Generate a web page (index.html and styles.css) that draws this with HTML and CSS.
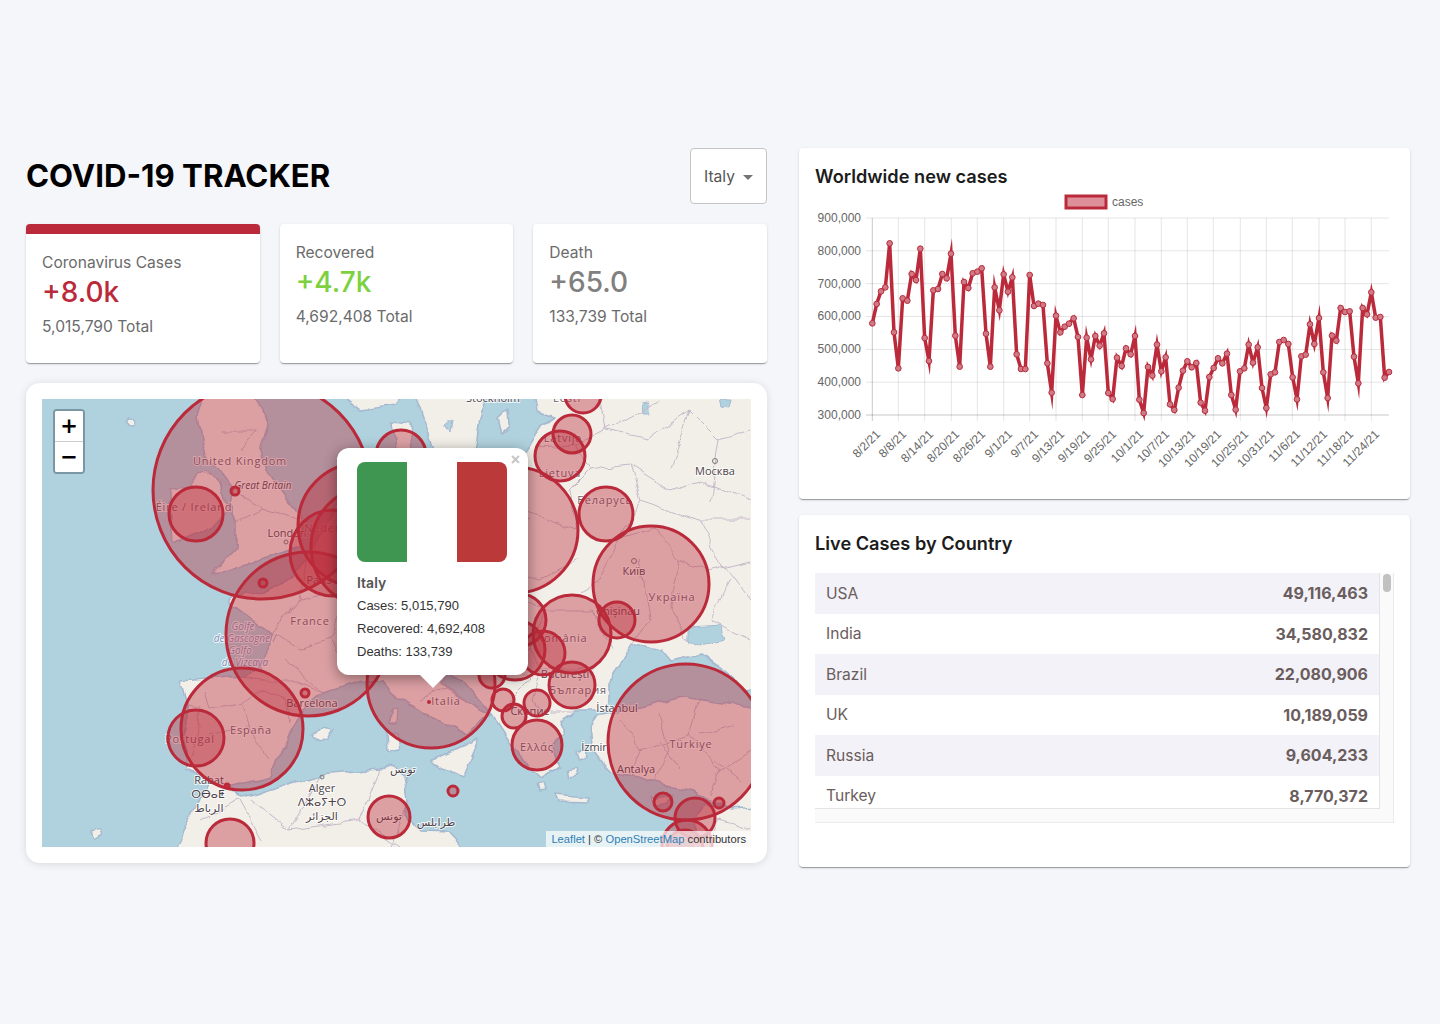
FILE: index.html
```html
<!DOCTYPE html>
<html lang="en">
<head>
<meta charset="utf-8">
<title>COVID-19 Tracker</title>
<link rel="stylesheet" href="styles.css">
</head>
<body>
<div class="app">
  <main class="left">
    <header class="header">
      <h1 class="title">COVID-19 TRACKER</h1>
      <div class="select"><span>Italy</span><i class="caret"></i></div>
    </header>
    <section class="stats">
      <article class="card stat stat-active">
        <p class="stat-label">Coronavirus Cases</p>
        <p class="stat-num red">+8.0k</p>
        <p class="stat-total">5,015,790 Total</p>
      </article>
      <article class="card stat">
        <p class="stat-label">Recovered</p>
        <p class="stat-num green">+4.7k</p>
        <p class="stat-total">4,692,408 Total</p>
      </article>
      <article class="card stat">
        <p class="stat-label">Death</p>
        <p class="stat-num grey">+65.0</p>
        <p class="stat-total">133,739 Total</p>
      </article>
    </section>
    <section class="map-card">
      <div class="map">
        <svg class="map-svg" viewBox="42 399 709 448" width="709" height="448" aria-label="Map of Europe">
          <defs>
            <filter id="rough" x="-5%" y="-5%" width="110%" height="110%" color-interpolation-filters="sRGB">
              <feTurbulence type="fractalNoise" baseFrequency=".04" numOctaves="3" seed="4" result="n"/>
              <feDisplacementMap in="SourceGraphic" in2="n" scale="10" xChannelSelector="R" yChannelSelector="G"/>
              <feGaussianBlur stdDeviation=".45"/>
            </filter>
          </defs>
          <rect class="water" x="42" y="399" width="709" height="448"/>
          <g class="geo">
            <g class="land">
              <path d="M533 385L770 385L770 690L747 693L723 670L703 655L670 662L660 650L633 643L623 660L607 683L607 700L605 712L575 712L560 722L566 735L552 745L560 765L540 778L528 768L510 740L498 722L478 698L462 680L445 672L440 685L470 705L493 717L480 722L467 735L433 717L400 700L385 682L363 680L323 692L303 710L287 737L270 777L227 787L187 770L187 707L180 680L243 675L263 670L270 633L230 603L230 597L263 590L293 577L307 557L340 500L370 480L400 470L470 470L517 467L527 452L545 425L555 418L537 412Z"/>
              <path d="M207 385L250 385L267 423L260 450L270 477L293 507L303 523L300 547L263 560L230 570L213 572L237 547L237 523L230 503L233 487L220 470L203 450L197 417Z"/>
              <path d="M207 470L220 483L227 513L203 533L173 543L170 507L170 490L190 487L197 473Z"/>
              <path d="M340 385L347 399L362 410L395 405L408 385Z"/>
              <path d="M413 385L490 385L480 420L472 470L440 470L432 440L425 420Z"/>
              <path d="M392 422L410 424L412 450L395 450Z"/>
              <path d="M597 717L617 713L640 707L683 697L770 710L770 840L733 810L700 796L690 790L660 785L640 777L613 773L603 763L593 750L590 727Z"/>
              <path d="M770 806L733 810L705 803L697 815L690 860L770 860Z"/>
              <path d="M170 860L197 807L207 780L227 787L243 798L270 790L320 775L380 770L393 763L405 778L408 800L405 815L420 832L450 833L475 860Z"/>
              <path d="M430 760L480 738L463 777L443 767Z"/>
              <path d="M386 730L397 733L399 750L387 752Z"/>
              <path d="M391 708L397 710L396 724L390 724Z"/>
              <path d="M311 737L322 728L332 730L326 740L317 743Z"/>
              <path d="M555 795L587 798L586 803L558 802Z"/>
              <path d="M498 420L508 410L509 425L502 432Z"/>
              <path d="M651 798L672 794L666 803L655 804Z"/>
              <path d="M91 832L101 829L103 836L95 841Z"/>
              <path d="M575 752L583 748L586 757L578 760Z"/>
              <path d="M568 770L575 768L577 775L570 777Z"/>
              <path d="M538 785L544 783L546 790L540 791Z"/>
              <circle cx="131" cy="422" r="4"/>
            </g>
            <g class="lakes">
              <path d="M690 627L720 625L725 640L700 645L690 640Z"/>
              <path d="M640 403L648 402L648 412L641 412Z"/>
              <path d="M720 399L730 399L728 408L722 407Z"/>
              <path d="M445 425L452 420L450 432Z"/>
            </g>
            <g class="borders">
              <path d="M243 675L262 682L300 682L323 692M187 707L200 709L198 740L187 770M205 690L210 710L240 705L255 740L270 760M240 705L262 690L285 700L290 720M210 735L250 725"/>
              <path d="M230 640L270 633L300 600L307 557M270 633L300 650L330 640L350 670M300 600L345 590L370 620L385 660M330 640L345 600M285 660L323 692"/>
              <path d="M200 470L240 490M233 487L262 510L303 523M237 523L262 510M240 450L255 430L220 430"/>
              <path d="M400 470L420 520L440 555L425 600L385 640M470 470L480 540L500 570M500 570L540 580L577 560M517 467L520 510L577 530M480 510L530 520M500 560L520 600L545 610"/>
              <path d="M537 447L575 445L603 430L640 410L660 399M575 445L590 470L570 490L577 530M590 470L630 465L670 490L700 480L751 500M630 465L640 500L620 540L655 530L680 560L710 570L751 560M620 540L600 580L580 590M640 500L700 520L751 520M680 560L670 610L690 640M640 560L650 620L630 645"/>
              <path d="M600 399L605 430L650 440L690 410L720 440L751 430M690 410L670 470M720 440L710 500M700 520L720 560L751 600M730 580L710 620L751 640"/>
              <path d="M545 610L590 610L612 650M545 610L530 650L540 670L596 670M540 670L530 700L545 712L575 712M510 660L530 680L510 700M478 650L510 660M450 640L500 625L530 650"/>
              <path d="M620 720L640 750L630 775M640 750L690 735L700 700M690 735L720 770L710 796M720 770L751 750M660 715L670 750L655 780M700 735L735 725M680 770L660 740M740 780L715 760"/>
              <path d="M200 820L240 800L262 840M250 800L290 830L320 775M290 830L360 820L380 770M360 820L400 847M408 800L392 847"/>
              <path d="M720 820L705 847M720 820L751 830"/>
              <path d="M410 672L430 670L445 690L470 705M420 700L445 690"/>
            </g>
          </g>
          <g class="labels">
            <text class="lb country" x="240" y="465">United Kingdom</text>
            <text class="lb it" x="263" y="489">Great Britain</text>
            <text class="lb country" x="194" y="511">Éire / Ireland</text>
            <text class="lb" x="287" y="537">London</text>
            <circle class="city" cx="286" cy="542" r="2"/>
            <text class="lb" x="319" y="584">Paris</text>
            <text class="lb country" x="310" y="625">France</text>
            <text class="lb sea" x="243" y="630">Golfe</text>
            <text class="lb sea" x="245" y="642">de Gascogne /</text>
            <text class="lb sea" x="240" y="654">Golfo</text>
            <text class="lb sea" x="245" y="666">de Vizcaya</text>
            <text class="lb country" x="251" y="734">España</text>
            <text class="lb country" x="190" y="743">Portugal</text>
            <text class="lb" x="312" y="707">Barcelona</text>
            <text class="lb" x="209" y="784">Rabat</text>
            <text class="lb" x="208" y="798">ⵔⴱⴰⵟ</text>
            <text class="lb" x="209" y="812">الرباط</text>
            <text class="lb" x="322" y="792">Alger</text>
            <text class="lb" x="322" y="806">ⴷⵣⴰⵢⵜⵔ</text>
            <text class="lb" x="322" y="820">الجزائر</text>
            <circle class="city" cx="322" cy="777" r="2"/>
            <text class="lb" x="389" y="820">تونس</text>
            <text class="lb" x="403" y="773">تونس</text>
            <text class="lb" x="436" y="826">طرابلس</text>
            <text class="lb country" x="446" y="705">Italia</text>
            <text class="lb country" x="562" y="642">România</text>
            <text class="lb" x="565" y="678">București</text>
            <text class="lb country" x="578" y="694">България</text>
            <text class="lb" x="530" y="715">Скопие</text>
            <text class="lb country" x="537" y="751">Ελλάς</text>
            <text class="lb" x="617" y="712">İstanbul</text>
            <text class="lb" x="594" y="751">İzmir</text>
            <text class="lb country" x="691" y="748">Türkiye</text>
            <text class="lb" x="636" y="773">Antalya</text>
            <text class="lb" x="715" y="475">Москва</text>
            <circle class="city" cx="715" cy="461" r="2.5"/>
            <text class="lb" x="634" y="575">Київ</text>
            <circle class="city" cx="634" cy="561" r="2.5"/>
            <text class="lb country" x="672" y="601">Україна</text>
            <text class="lb" x="618" y="615">Chișinău</text>
            <text class="lb country" x="605" y="504">Беларусь</text>
            <text class="lb country" x="563" y="442">Latvija</text>
            <text class="lb country" x="560" y="477">Lietuva</text>
            <text class="lb country" x="567" y="402">Eesti</text>
            <text class="lb" x="493" y="402">Stockholm</text>
            <text class="lb country" x="335" y="532">Nederland</text>
          </g>
          <g class="bubbles">
            <circle cx="262" cy="490" r="109"/>
            <circle cx="196" cy="514" r="27"/>
            <circle cx="235" cy="491" r="4"/>
            <circle cx="263" cy="583" r="4"/>
            <circle cx="360" cy="525" r="62"/>
            <circle cx="333" cy="553" r="43"/>
            <circle cx="372" cy="547" r="61"/>
            <circle cx="308" cy="634" r="82"/>
            <circle cx="242" cy="729" r="61"/>
            <circle cx="196" cy="738" r="28"/>
            <circle cx="230" cy="843" r="24"/>
            <circle cx="227" cy="786" r="2"/>
            <circle cx="305" cy="693" r="4"/>
            <circle cx="389" cy="817" r="21"/>
            <circle cx="431" cy="684" r="64"/>
            <circle cx="453" cy="791" r="5"/>
            <circle cx="401" cy="455" r="25"/>
            <circle cx="583" cy="395" r="18"/>
            <circle cx="572" cy="434" r="19"/>
            <circle cx="560" cy="456" r="25"/>
            <circle cx="606" cy="514" r="27"/>
            <circle cx="515" cy="530" r="63"/>
            <circle cx="651" cy="584" r="58"/>
            <circle cx="617" cy="620" r="18"/>
            <circle cx="572" cy="634" r="39"/>
            <circle cx="520" cy="620" r="26"/>
            <circle cx="515" cy="650" r="30"/>
            <circle cx="543" cy="653" r="22"/>
            <circle cx="572" cy="685" r="23"/>
            <circle cx="537" cy="703" r="13"/>
            <circle cx="514" cy="716" r="12"/>
            <circle cx="503" cy="700" r="11"/>
            <circle cx="492" cy="675" r="13"/>
            <circle cx="537" cy="745" r="25"/>
            <circle cx="686" cy="742" r="78"/>
            <circle cx="663" cy="802" r="9"/>
            <circle cx="719" cy="803" r="5"/>
            <circle cx="695" cy="818" r="20"/>
            <circle cx="687" cy="845" r="25"/>
            <circle cx="685" cy="848" r="18"/>
          </g>
          <circle class="bubble-dot" cx="429" cy="702" r="2"/>
        </svg>
        <div class="zoom-ctl">
          <button class="zoom-btn zoom-in" type="button">+</button>
          <button class="zoom-btn" type="button">−</button>
        </div>
        <div class="popup">
          <div class="flag"><i class="flag-g"></i><i class="flag-w"></i><i class="flag-r"></i></div>
          <p class="pop-name">Italy</p>
          <p class="pop-line">Cases: 5,015,790</p>
          <p class="pop-line">Recovered: 4,692,408</p>
          <p class="pop-line">Deaths: 133,739</p>
          <span class="pop-close">×</span>
          <i class="pop-tip"></i>
        </div>
        <div class="attrib"><a>Leaflet</a> | © <a>OpenStreetMap</a> contributors</div>
      </div>
    </section>
  </main>
  <aside class="right">
    <section class="card panel chart-panel">
      <h3 class="panel-title chart-title">Worldwide new cases</h3>
      <svg class="chart" viewBox="815 190 579 290" width="579" height="290" aria-label="Worldwide new cases chart">
        <defs>
          <marker id="pt" markerUnits="userSpaceOnUse" viewBox="-12 -12 24 24" markerWidth="24" markerHeight="24" refX="0" refY="0">
            <circle class="pt" r="8.5"/>
          </marker>
        </defs>
        <rect class="legend-box" x="1066" y="196" width="40" height="12"/>
        <text class="legend-text" x="1112" y="206">cases</text>
        <g class="grid-h">
          <path class="edge" d="M866 218H1389"/>
          <path d="M866 250.8H1389M866 283.7H1389M866 316.5H1389M866 349.4H1389M866 382.2H1389"/>
          <path class="axis" d="M866 415H1389"/>
        </g>
        <g class="grid-v">
          <path class="axis" d="M872.3 218V421"/>
          <path d="M898.3 218V421M924.7 218V421M951.3 218V421M977.3 218V421M1003.7 218V421M1029.7 218V421M1056 218V421M1082.3 218V421M1108.3 218V421M1135 218V421M1161.3 218V421M1187.3 218V421M1213.3 218V421M1240.3 218V421M1266.3 218V421M1292.3 218V421M1319 218V421M1345 218V421M1371.3 218V421"/>
        </g>
        <g class="ylabels">
          <text x="861" y="222">900,000</text>
          <text x="861" y="255">800,000</text>
          <text x="861" y="288">700,000</text>
          <text x="861" y="320">600,000</text>
          <text x="861" y="353">500,000</text>
          <text x="861" y="386">400,000</text>
          <text x="861" y="419">300,000</text>
        </g>
        <g class="xlabels">
          <text transform="translate(881 435) rotate(-45)">8/2/21</text>
          <text transform="translate(907 435) rotate(-45)">8/8/21</text>
          <text transform="translate(934 435) rotate(-45)">8/14/21</text>
          <text transform="translate(960 435) rotate(-45)">8/20/21</text>
          <text transform="translate(986 435) rotate(-45)">8/26/21</text>
          <text transform="translate(1013 435) rotate(-45)">9/1/21</text>
          <text transform="translate(1039 435) rotate(-45)">9/7/21</text>
          <text transform="translate(1065 435) rotate(-45)">9/13/21</text>
          <text transform="translate(1091 435) rotate(-45)">9/19/21</text>
          <text transform="translate(1117 435) rotate(-45)">9/25/21</text>
          <text transform="translate(1144 435) rotate(-45)">10/1/21</text>
          <text transform="translate(1170 435) rotate(-45)">10/7/21</text>
          <text transform="translate(1196 435) rotate(-45)">10/13/21</text>
          <text transform="translate(1222 435) rotate(-45)">10/19/21</text>
          <text transform="translate(1249 435) rotate(-45)">10/25/21</text>
          <text transform="translate(1275 435) rotate(-45)">10/31/21</text>
          <text transform="translate(1301 435) rotate(-45)">11/6/21</text>
          <text transform="translate(1328 435) rotate(-45)">11/12/21</text>
          <text transform="translate(1354 435) rotate(-45)">11/18/21</text>
          <text transform="translate(1380 435) rotate(-45)">11/24/21</text>
        </g>
        <g transform="translate(800 150) scale(.33333)">
          <polyline class="series" points="217,520 230,462 243,424 256,412 269,280 282,547 295,655 308,445 322,452 335,372 348,390 361,296 374,564 387,633 400,421 414,417 427,372 440,385 453,311 466,557 479,650 492,396 505,414 518,370 532,365 545,355 558,551 571,650 584,412 598,481 611,373 624,425 637,382 650,613 663,657 676,657 689,375 702,468 715,461 729,465 742,640 755,728 768,497 781,547 794,530 807,521 821,505 834,561 847,735 860,563 873,628 886,558 899,587 912,550 925,729 938,747 951,623 965,648 978,595 992,613 1005,558 1018,749 1031,789 1044,651 1057,677 1071,584 1084,664 1097,622 1110,763 1123,780 1136,713 1149,662 1162,634 1175,652 1189,639 1202,758 1215,782 1228,681 1241,654 1254,625 1267,640 1281,611 1294,735 1307,779 1320,664 1333,655 1346,584 1359,638 1373,592 1386,714 1399,774 1412,673 1425,667 1438,576 1451,570 1465,582 1478,682 1491,748 1504,619 1517,614 1530,523 1543,582 1557,504 1570,667 1583,744 1596,557 1609,572 1622,474 1635,486 1649,484 1662,620 1675,700 1688,474 1701,493 1714,427 1727,503 1741,501 1754,683 1767,666"/>
        </g>
      </svg>
    </section>
    <section class="card panel table-panel">
      <h3 class="panel-title">Live Cases by Country</h3>
      <div class="table-wrap">
        <div class="table-view">
          <div class="row"><span>USA</span><strong>49,116,463</strong></div>
          <div class="row"><span>India</span><strong>34,580,832</strong></div>
          <div class="row"><span>Brazil</span><strong>22,080,906</strong></div>
          <div class="row"><span>UK</span><strong>10,189,059</strong></div>
          <div class="row"><span>Russia</span><strong>9,604,233</strong></div>
          <div class="row"><span>Turkey</span><strong>8,770,372</strong></div>
          <div class="row"><span>France</span><strong>7,600,000</strong></div>
        </div>
        <i class="thumb"></i>
      </div>
    </section>
  </aside>
</div>
</body>
</html>
```
FILE: styles.css
```css
* { box-sizing: border-box; }
html, body { margin: 0; height: 100%; }
body {
  background: #f5f6fa;
  font-family: Inter, "Liberation Sans", sans-serif;
  color: #000;
}
p, h1, h3 { margin: 0; }
.app {
  display: flex;
  justify-content: space-between;
  gap: 32px;
  padding: 148px 30px 0 26px;
  min-height: 1024px;
}
.left { width: 741px; display: flex; flex-direction: column; }
.right { width: 611px; display: flex; flex-direction: column; gap: 16px; }

.header {
  display: flex;
  justify-content: space-between;
  align-items: center;
  height: 56px;
  margin-bottom: 20px;
}
.title { font-size: 31.2px; font-weight: 700; line-height: 62px; color: #000; }
.select {
  width: 77px;
  height: 56px;
  background: #fff;
  border: 1px solid #c4c4c4;
  border-radius: 4px;
  display: flex;
  align-items: center;
  padding-left: 13px;
  font-size: 15.6px;
  color: #555;
  position: relative;
}
.caret {
  position: absolute;
  right: 13px;
  top: 26px;
  border-left: 5px solid transparent;
  border-right: 5px solid transparent;
  border-top: 5px solid #757575;
}

.card {
  background: #fff;
  border-radius: 4px;
  box-shadow: 0 2px 1px -1px rgba(0,0,0,.2), 0 1px 1px rgba(0,0,0,.14), 0 1px 3px rgba(0,0,0,.12);
}
.stats { display: flex; gap: 20px; margin-bottom: 20px; }
.stat { flex: 1; height: 139px; padding: 19px 16px 0; }
.stat-active { border-top: 10px solid #bb2a3a; }
.stat-label { font-size: 15.6px; line-height: 19px; color: #6b6b6b; }
.stat-num { font-size: 28px; font-weight: 500; line-height: 34px; margin-top: 3px; }
.red { color: #bb2a3a; }
.green { color: #7dd13f; }
.grey { color: #808080; }
.stat-total { font-size: 15.6px; line-height: 19px; color: #6b6b6b; margin-top: 8px; }

.map-card {
  background: #fff;
  border-radius: 14px;
  padding: 16px;
  height: 480px;
  box-shadow: 0 1px 8px rgba(0,0,0,.12);
}
.map { position: relative; width: 709px; height: 448px; overflow: hidden; }
.map-svg { display: block; }
.water { fill: #b0d2de; }
.geo { filter: url(#rough); }
.land path, .land circle { fill: #f2efe9; stroke: #a5b9d0; stroke-width: 1.6; stroke-linejoin: round; }
.lakes path { fill: #b0d2de; stroke: #a5b9d0; stroke-width: 1; }
.borders path { fill: none; stroke: #c6bac9; stroke-width: 1; stroke-linejoin: round; }
.lb {
  font-family: "Open Sans", "DejaVu Sans", sans-serif;
  font-size: 11px;
  text-anchor: middle;
  fill: #4e4349;
  stroke: rgba(255,255,255,.75);
  stroke-width: 2px;
  paint-order: stroke;
}
.country { fill: #6f6168; letter-spacing: .8px; }
.it { font-style: italic; font-size: 10px; }
.sea { font-style: italic; font-size: 10px; fill: #7d93bd; }
.city { fill: none; stroke: #777; stroke-width: 1; }
.bubbles circle {
  fill: rgba(187,42,58,.4);
  stroke: #bb2a3a;
  stroke-width: 3;
}
.bubble-dot { fill: #bb2a3a; }

.zoom-ctl {
  position: absolute;
  left: 11px;
  top: 10px;
  width: 32px;
  border-radius: 4px;
  border: 2px solid #7b97a3;
  background: #fff;
  overflow: hidden;
}
.zoom-btn {
  display: block;
  width: 28px;
  height: 30px;
  border: 0;
  padding: 0;
  background: #fff;
  color: #000;
  font: 700 21px/30px "DejaVu Sans", "Liberation Sans", sans-serif;
}
.zoom-in { border-bottom: 1px solid #ccc; height: 31px; }
.popup {
  position: absolute;
  left: 295px;
  top: 49px;
  width: 191px;
  height: 227px;
  background: #fff;
  border-radius: 12px;
  padding: 14px 20px;
  box-shadow: 0 3px 14px rgba(0,0,0,.4);
}
.flag { display: flex; width: 150px; height: 100px; border-radius: 8px; overflow: hidden; }
.flag i { flex: 1; }
.flag-g { background: #3f9650; }
.flag-w { background: #fff; }
.flag-r { background: #bc3939; }
.pop-name { font-size: 14px; font-weight: 600; color: #555; line-height: 17px; margin-top: 12px; margin-bottom: 3px; }
.pop-line { font-family: "Liberation Sans", sans-serif; font-size: 13px; line-height: 23px; color: #333; }
.pop-close {
  position: absolute;
  right: 8px;
  top: 2px;
  font: 700 16px/20px "Liberation Sans", sans-serif;
  color: #c3c3c3;
}
.pop-tip {
  position: absolute;
  left: 83px;
  bottom: -13px;
  border-left: 13px solid transparent;
  border-right: 13px solid transparent;
  border-top: 13px solid #fff;
}
.attrib {
  position: absolute;
  right: 0;
  bottom: 0;
  padding: 0 5px;
  height: 16px;
  background: rgba(255,255,255,.7);
  font: 11.2px/16px "Liberation Sans", sans-serif;
  color: #333;
}
.attrib a { color: #2f7fb5; }

.panel { padding: 17px 16px 0; }
.panel-title { font-size: 18.2px; font-weight: 600; line-height: 23px; color: #1c1c1c; }
.chart-panel { height: 351px; }
.chart { display: block; margin-top: 2px; }
.legend-box { fill: #dd8f9a; stroke: #bb2a3a; stroke-width: 3; }
.legend-text { font: 12px "Liberation Sans", sans-serif; fill: #666; }
.grid-h path, .grid-v path { stroke: rgba(0,0,0,.1); stroke-width: 1; fill: none; }
.grid-h .edge { stroke: rgba(0,0,0,.07); stroke-width: 1.5; }
.grid-h .axis, .grid-v .axis { stroke: rgba(0,0,0,.22); }
.ylabels text { font: 12px "Liberation Sans", sans-serif; fill: #666; text-anchor: end; }
.xlabels text { font: 12px "Liberation Sans", sans-serif; fill: #666; text-anchor: end; }
.series {
  fill: none;
  stroke: #bb2a3a;
  stroke-width: 10.5;
  stroke-miterlimit: 10;
  marker-start: url(#pt);
  marker-mid: url(#pt);
  marker-end: url(#pt);
}
.pt { fill: #cf7a87; stroke: #bb2a3a; stroke-width: 3; }

.table-panel { height: 352px; }
.table-wrap {
  position: relative;
  margin-top: 18px;
  height: 250px;
  width: 579px;
  background: #fafafa;
  border-bottom: 1px solid #ebebeb;
  border-right: 1px solid #ebebeb;
}
.table-view {
  width: 565px;
  height: 236px;
  overflow: hidden;
  background: #fff;
  border-right: 1px solid #e4e4e4;
  border-bottom: 1px solid #e4e4e4;
}
.row {
  display: flex;
  justify-content: space-between;
  align-items: center;
  height: 40.5px;
  padding: 0 11px;
  font-size: 15.6px;
  color: #6a5d5d;
}
.row:nth-child(odd) { background: #f3f2f8; }
.row strong { font-size: 16px; font-weight: 700; }
.thumb {
  position: absolute;
  left: 568px;
  top: 1px;
  width: 8px;
  height: 18px;
  border-radius: 4px;
  background: #c1c1c1;
}
```
